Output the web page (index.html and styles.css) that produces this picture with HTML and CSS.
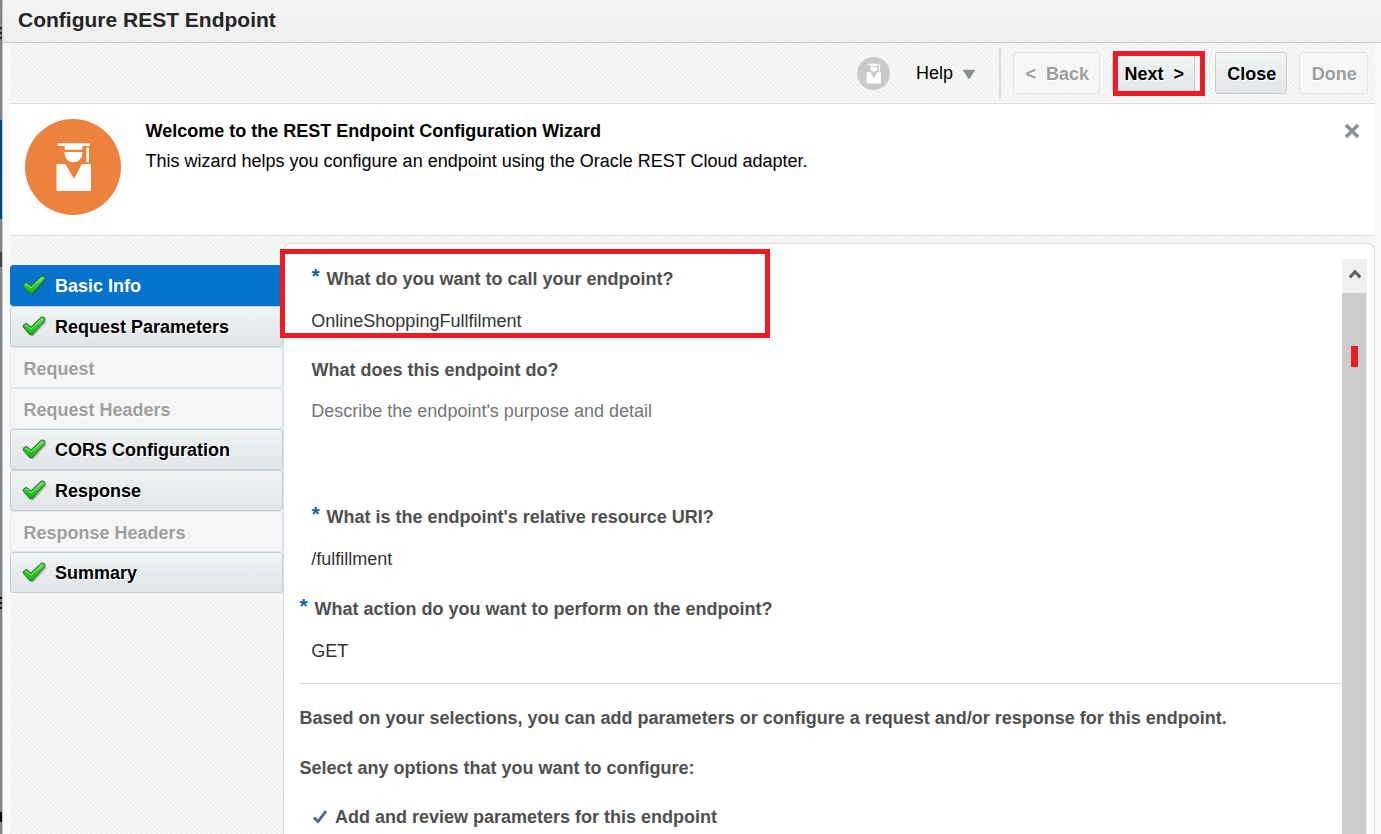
FILE: index.html
```html
<!DOCTYPE html>
<html lang="en">
<head>
<meta charset="utf-8">
<title>Configure REST Endpoint</title>
<link rel="stylesheet" href="styles.css">
</head>
<body>
<svg class="defs" width="0" height="0">
  <defs>
    <linearGradient id="green" x1="0" y1="0" x2="0" y2="1">
      <stop offset="0" stop-color="#74df68"/><stop offset=".5" stop-color="#2fd02a"/><stop offset="1" stop-color="#06b90a"/>
    </linearGradient>
    <symbol id="tick" viewBox="0 0 26 23">
      <path d="M2 11.3 5.2 8.2 9.4 12 19.7 2.2 23.3 4.5 10.2 18.8 8.3 18.8Z" fill="#444" opacity=".35" transform="translate(1.3 1.5)"/>
      <path d="M1.2 11Q1.2 8.4 4.4 7.4L9 11.2 19.4 1.2Q22.3.6 23.2 3.8L10.2 18.4 8 18.6Z" fill="url(#green)" stroke="#2b7d2d" stroke-width="1.1" stroke-linejoin="round"/>
      <path d="M2.8 10 4.2 8.9 9 13 20 2.6" fill="none" stroke="#a3eba0" stroke-width="1" opacity=".75"/>
    </symbol>
    <symbol id="graduate" viewBox="0 0 96 96">
      <circle cx="48" cy="48" r="48" fill="currentColor"/>
      <g class="figure">
        <path d="M32.8 24.2H64.8V27H57.3V30.7H39.7V27H32.8Z"/>
        <path d="M39.3 33H57.7Q56.5 43.3 48.5 43.3 40.5 43.3 39.3 33Z"/>
        <path d="M61.3 28.5H64V43.2H61.3Z"/>
        <path d="M32.5 45H40.3L49 59.8 57 45H65Q66 45 66 46V71Q66 72 65 72H32.5Q31.5 72 31.5 71V46Q31.5 45 32.5 45Z"/>
      </g>
    </symbol>
  </defs>
</svg>
<div class="screen">
  <div class="backdrop"><i class="b1"></i><i class="b2"></i><i class="b3"></i><i class="b4"></i><i class="b5"></i><i class="b6"></i></div>
  <div class="dialog">
    <header class="titlebar">Configure REST Endpoint</header>
    <div class="body">
      <div class="toolbar">
        <svg class="avatar"><use href="#graduate"/></svg>
        <span class="help">Help</span>
        <svg class="caret" width="14" height="11"><path d="M.5.8H13.5L7.6 9.7H6.4Z" fill="#879095"/></svg>
        <span class="sep"></span>
        <button class="btn back off">&lt;&nbsp; Back</button>
        <button class="btn next">Next&nbsp; &gt;</button>
        <span class="sep2"></span>
        <button class="btn close">Close</button>
        <button class="btn done off">Done</button>
      </div>
      <section class="welcome">
        <svg class="logo"><use href="#graduate"/></svg>
        <div class="intro">
          <h1>Welcome to the REST Endpoint Configuration Wizard</h1>
          <p>This wizard helps you configure an endpoint using the Oracle REST Cloud adapter.</p>
        </div>
        <svg class="dismiss" width="16" height="16"><path d="M2 2 14 14M14 2 2 14" stroke="#8b9195" stroke-width="3.6"/></svg>
      </section>
      <main class="main">
        <nav class="steps">
          <a class="step active"><svg><use href="#tick"/></svg>Basic Info</a>
          <a class="step"><svg><use href="#tick"/></svg>Request Parameters</a>
          <a class="step off">Request</a>
          <a class="step off">Request Headers</a>
          <a class="step"><svg><use href="#tick"/></svg>CORS Configuration</a>
          <a class="step"><svg><use href="#tick"/></svg>Response</a>
          <a class="step off">Response Headers</a>
          <a class="step"><svg><use href="#tick"/></svg>Summary</a>
        </nav>
        <div class="panel">
          <div class="form">
            <div class="label name"><b class="req">*</b>What do you want to call your endpoint?</div>
            <div class="value">OnlineShoppingFullfilment</div>
            <div class="label purpose">What does this endpoint do?</div>
            <div class="value hint">Describe the endpoint's purpose and detail</div>
            <div class="label uri"><b class="req">*</b>What is the endpoint's relative resource URI?</div>
            <div class="value">/fulfillment</div>
            <div class="label action"><b class="req">*</b>What action do you want to perform on the endpoint?</div>
            <div class="value">GET</div>
            <hr>
            <div class="label based">Based on your selections, you can add parameters or configure a request and/or response for this endpoint.</div>
            <div class="label select">Select any options that you want to configure:</div>
            <div class="label option"><svg width="16" height="16"><path d="M1.8 8.4 6 12.6 14 2.2" fill="none" stroke="#53659d" stroke-width="2.8"/></svg>Add and review parameters for this endpoint</div>
          </div>
          <div class="scrollbar">
            <div class="up"><svg width="12" height="10"><path d="M.8 8.4 6 2.8 11.2 8.4" fill="none" stroke="#606060" stroke-width="3"/></svg></div>
            <div class="thumb"></div>
          </div>
        </div>
      </main>
    </div>
  </div>
  <div class="mark mark-next"></div>
  <div class="mark mark-name"></div>
  <div class="mark mark-scroll"></div>
</div>
</body>
</html>
```
FILE: styles.css
```css
* { box-sizing: border-box; }
body { margin: 0; font: 18px/22px "Liberation Sans", Arial, sans-serif; color: #000; overflow: hidden; }
.defs { position: absolute; }
.screen { position: relative; display: flex; width: 1381px; height: 834px; overflow: hidden; }
.backdrop { display: flex; flex: none; flex-direction: column; width: 2px; background: #858585; }
.backdrop i { flex: none; width: 2px; }
.b1 { height: 13px; margin-top: 27px; background: repeating-linear-gradient(#222 0 2px, #777 2px 5px); }
.b2 { height: 57px; margin-top: 23px; background: #8b8577; }
.b3 { height: 99px; background: #00457c; }
.b4 { height: 15px; margin-top: 33px; background: #45454b; }
.b5 { height: 12px; margin-top: 330px; background: repeating-linear-gradient(#111 0 2px, #777 2px 5px); }
.b6 { height: 10px; margin-top: 203px; background: #080c14; }
.dialog { flex: 1; min-width: 0; display: flex; flex-direction: column; border-left: 1px solid #c2ccd6; background: #f9f9f9; }
.titlebar { height: 43px; padding: 8px 0 0 15px; border-bottom: 1px solid #c4ced7; background: linear-gradient(#f5f5f5, #eee); color: #252525; font-size: 21px; line-height: 24px; font-weight: bold; }
.body { flex: 1; display: flex; flex-direction: column; margin: 0 6px 0 7px; background: linear-gradient(45deg, #f2f2f2 25%, #f9f9f9 25% 50%, #f2f2f2 50% 75%, #f9f9f9 75%) 0 0 / 5px 5px; }
.toolbar { display: flex; align-items: center; height: 61px; padding-right: 7px; border-bottom: 1px solid #d6dfe6; }
.toolbar > * { flex: none; }
.figure { fill: #fff; transform-origin: 48px 48px; transform: scale(var(--figure-scale, 1)); }
.avatar { --figure-scale: 1.2; width: 33px; height: 33px; margin-left: 847px; color: #c9c9c9; }
.help { width: 46px; margin-left: 26px; }
.caret { margin-top: 2px; }
.sep { width: 2px; height: 51px; margin-left: 23px; background: #d6dfe6; }
.sep2 { width: 1px; height: 51px; margin-left: 9px; background: #d6dfe6; }
.btn { height: 42px; padding: 2px 0 0 1.5px; border: 1px solid #c4ced7; border-radius: 3px; background: linear-gradient(#f3f5f6, #e2e6e9); font: bold 18px/22px "Liberation Sans", Arial, sans-serif; color: #000; text-shadow: 1px 1px 0 #fff; white-space: nowrap; }
.btn.off { border-color: #dfe5eb; background: #f4f6f8; color: #9e9e9e; }
.back { width: 87px; margin-left: 12px; }
.next { width: 83px; margin-left: 12px; }
.close { width: 72px; margin-left: 10px; }
.done { width: 69px; margin-left: 12px; }
.welcome { display: flex; align-items: flex-start; height: 132px; padding: 15px 15px 0; border-bottom: 1px solid #d6dfe6; background: #fff; }
.logo { width: 96px; height: 96px; color: #ed823f; }
.intro { flex: 1; margin-left: 24.5px; }
.intro h1 { margin: 1px 0 8px; font-size: 18px; line-height: 22px; }
.intro p { margin: 0; }
.dismiss { margin-top: 4px; }
.main { flex: 1; display: flex; min-height: 0; }
.steps { width: 273px; padding-top: 29px; }
.step { display: flex; align-items: center; height: 41px; padding-left: 12.5px; border: 1px solid #c4ced7; border-radius: 3px; background: linear-gradient(#f0f2f3, #e1e5e8); font-weight: bold; text-shadow: 1px 1px 0 #fff; }
.step svg { width: 26px; height: 23px; margin: 1px 7px 0 -1.5px; }
.step.active { border-color: #0572ce; background: #0572ce; color: #fff; text-shadow: none; }
.step.off { padding-top: 2px; border-color: #e0e6ec; background: #f4f6f8; color: #9e9e9e; }
.panel { flex: 1; display: flex; min-width: 0; margin-top: 7px; border: 1px solid #d3dfe8; border-bottom: 0; border-radius: 8px 8px 0 0; background: #fff; }
.form { flex: none; width: 1058px; padding: 24px 1px 0 15px; white-space: nowrap; }
.label { height: 22px; color: #4f4f4f; font-weight: bold; padding-left: .5px; }
.name, .uri, .purpose { padding-left: 12.5px; }
.name, .uri, .action { display: flex; }
.req { width: 15px; color: #0b5fae; font-size: 21px; line-height: 15px; }
.value { height: 22px; margin: 20px 0 0 12.3px; color: #333; }
.purpose { margin-top: 27px; }
.hint { margin-top: 19px; color: #757575; }
.uri { margin-top: 84px; }
.action { margin-top: 28px; }
hr { height: 1px; margin: 21px 0 0; border: 0; background: #d6dfe6; }
.based { margin-top: 23px; }
.select { margin-top: 28px; }
.option { display: flex; align-items: center; margin: 27px 0 0 12px; }
.option svg { margin-right: 7.5px; }
.scrollbar { flex: none; display: flex; flex-direction: column; width: 25px; margin-top: 15px; background: #f0f0f0; }
.up { display: flex; align-items: center; justify-content: center; height: 34px; padding-bottom: 4px; }
.thumb { flex: 1; width: 24px; background: #cdcdcd; }
.mark { position: absolute; border: 5px solid #ed1c24; }
.mark-next { left: 1113px; top: 51px; width: 92px; height: 45px; }
.mark-name { left: 280px; top: 249px; width: 490px; height: 89px; }
.mark-scroll { left: 1351px; top: 346px; width: 7px; height: 21px; border: 0; background: #ed1c24; }
```
